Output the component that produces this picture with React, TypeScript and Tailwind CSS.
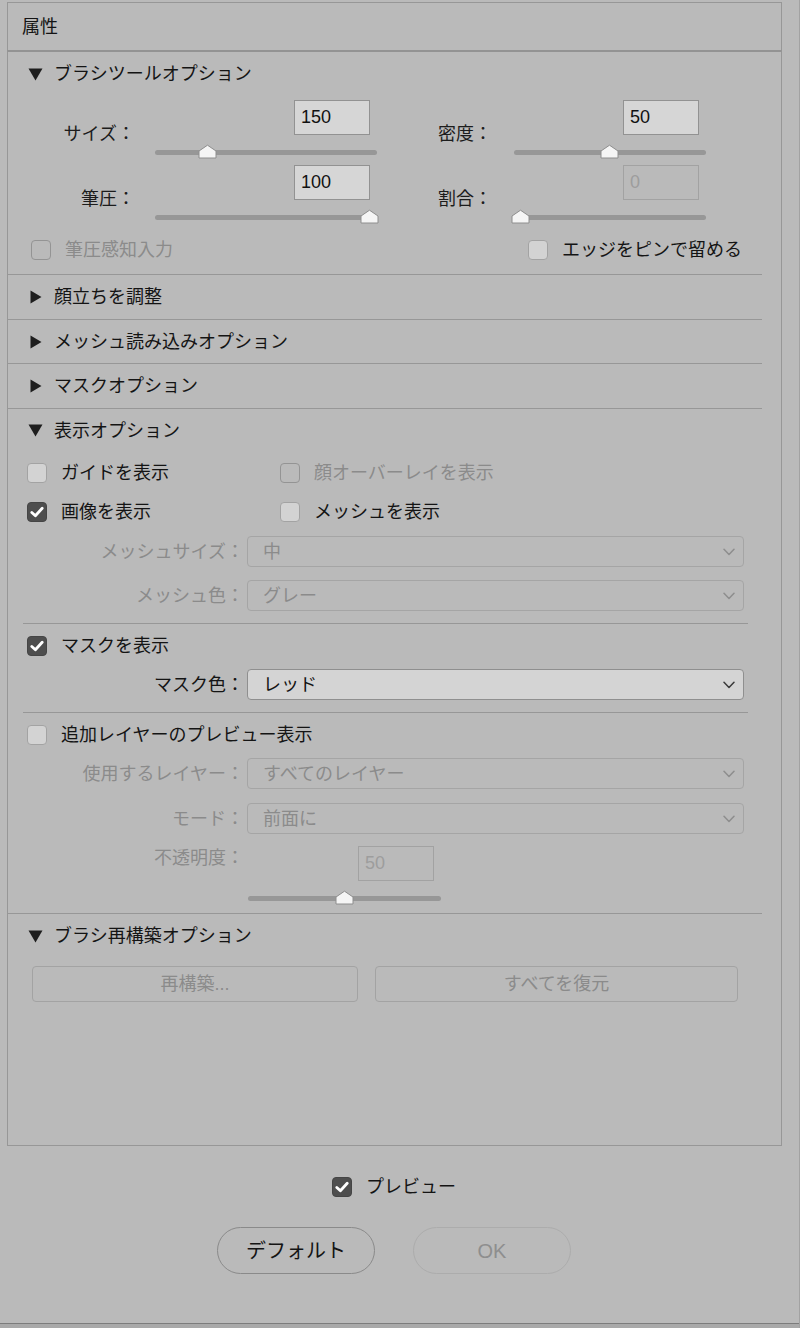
import React from "react";

const FONT = "font-['Liberation_Sans','Noto_Sans_CJK_JP',sans-serif]";

function Tri({ open }: { open: boolean }) {
  return open ? (
    <svg width="15" height="13" viewBox="0 0 15 13" className="ml-[1px]">
      <path d="M0.5 0.5 H14.5 L7.5 12.5 Z" fill="#1e1e1e" />
    </svg>
  ) : (
    <svg width="12" height="14" viewBox="0 0 12 14" className="ml-[3px]">
      <path d="M0.5 0.5 V13.5 L11.5 7 Z" fill="#1e1e1e" />
    </svg>
  );
}

function SectionHeader({ open, title, short = false }: { open: boolean; title: string; short?: boolean }) {
  return (
    <div className={short ? "h-[43px] flex items-center pl-[19px]" : "h-[44px] flex items-center pl-[19px]"}>
      <span className="w-[27px] flex items-center">
        <Tri open={open} />
      </span>
      <span className="text-[18px] leading-[24px] text-[#141414]">{title}</span>
    </div>
  );
}

function Box({ checked = false, disabled = false }: { checked?: boolean; disabled?: boolean }) {
  if (checked) {
    return (
      <span className="w-[20px] h-[20px] shrink-0 rounded-[4px] bg-[#4e4e4e] border border-[#454545] flex items-center justify-center">
        <svg width="14" height="12" viewBox="0 0 14 12">
          <path d="M1.8 6.4 L5.4 9.8 L12.2 2.2" fill="none" stroke="#ffffff" strokeWidth="2.8" strokeLinecap="round" strokeLinejoin="round" />
        </svg>
      </span>
    );
  }
  return (
    <span
      className={
        disabled
          ? "w-[20px] h-[20px] shrink-0 rounded-[4px] border border-[#949494]"
          : "w-[20px] h-[20px] shrink-0 rounded-[4px] border border-[#a3a3a3] bg-[#d3d3d3]"
      }
    />
  );
}

function Check({ label, checked = false, disabled = false }: { label: string; checked?: boolean; disabled?: boolean }) {
  return (
    <div className="flex items-center gap-[14px] h-[20px]">
      <Box checked={checked} disabled={disabled} />
      <span className={disabled ? "text-[18px] leading-[24px] text-[#8b8b8b]" : "text-[18px] leading-[24px] text-[#141414]"}>{label}</span>
    </div>
  );
}

function Thumb({ pos }: { pos: number }) {
  return (
    <svg className="absolute top-0" style={{ left: pos }} width="19" height="15" viewBox="0 0 19 15">
      <path d="M1 14 V7 L9.5 1.2 L18 7 V14 Z" fill="#f5f5f5" stroke="#8e8e8e" strokeWidth="1" strokeLinejoin="round" />
    </svg>
  );
}

function Track() {
  return <div className="absolute left-0 right-0 top-[6px] h-[5px] rounded-full bg-[#979797]" />;
}

function NumField({ value, disabled = false }: { value: string; disabled?: boolean }) {
  return (
    <div
      className={
        disabled
          ? "w-[76px] h-[35px] border border-[#a2a2a2] flex items-center pl-[6px] text-[18px] text-[#9d9d9d]"
          : "w-[76px] h-[35px] border border-[#929292] bg-[#d6d6d6] flex items-center pl-[6px] text-[18px] text-[#111111]"
      }
    >
      {value}
    </div>
  );
}

function Select({ label, value, disabled = false }: { label: string; value: string; disabled?: boolean }) {
  return (
    <div className="flex items-center h-[31px]">
      <div className={disabled ? "w-[236px] text-right text-[18px] leading-[24px] text-[#8b8b8b]" : "w-[236px] text-right text-[18px] leading-[24px] text-[#141414]"}>
        {label}
      </div>
      <div
        className={
          disabled
            ? "ml-[3px] w-[497px] h-[31px] rounded-[4px] border border-[#a5a5a5] flex items-center pl-[15px] pr-[8px]"
            : "ml-[3px] w-[497px] h-[31px] rounded-[4px] border border-[#8f8f8f] bg-[#d4d4d4] flex items-center pl-[15px] pr-[8px]"
        }
      >
        <span className={disabled ? "flex-1 text-[18px] leading-[24px] text-[#8b8b8b]" : "flex-1 text-[18px] leading-[24px] text-[#141414]"}>{value}</span>
        <svg width="12" height="8" viewBox="0 0 12 8">
          <path d="M1 1.2 L6 6.5 L11 1.2" fill="none" stroke={disabled ? "#8e8e8e" : "#3a3a3a"} strokeWidth="1.5" strokeLinecap="round" strokeLinejoin="round" />
        </svg>
      </div>
    </div>
  );
}

function SliderRow({
  l1, v1, p1, l2, v2, p2, d2 = false,
}: { l1: string; v1: string; p1: number; l2: string; v2: string; p2: number; d2?: boolean }) {
  return (
    <div className="flex">
      <div className="w-[127px] text-right pt-[22px] text-[18px] leading-[24px] text-[#1c1c1c]">{l1}</div>
      <div className="ml-[20px] w-[222px] flex flex-col">
        <div className="self-end mr-[7px]">
          <NumField value={v1} />
        </div>
        <div className="mt-[9px] relative h-[15px]">
          <Track />
          <Thumb pos={p1} />
        </div>
      </div>
      <div className="w-[115px] text-right pt-[22px] text-[18px] leading-[24px] text-[#1c1c1c]">{l2}</div>
      <div className="ml-[22px] w-[192px] flex flex-col">
        <div className="self-end mr-[7px]">
          <NumField value={v2} disabled={d2} />
        </div>
        <div className="mt-[9px] relative h-[15px]">
          <Track />
          <Thumb pos={p2} />
        </div>
      </div>
    </div>
  );
}

function Divider() {
  return <div className="ml-[15px] mr-[14px] h-px bg-[#979797]" />;
}

export default function App() {
  return (
    <div className={`${FONT} w-[800px] h-[1328px] bg-[#bababa] flex flex-col overflow-hidden border-r border-[#a2a2a2]`}>
      <div className="ml-[7px] mt-[2px] w-[775px] flex flex-col">
        <div className="h-[49px] border border-[#979797] flex items-center pl-[14px] text-[18px] leading-[24px] text-[#141414]">
          属性
        </div>
        <div className="h-[1096px] border border-t-2 border-[#979797] border-t-[#939393] -mt-px">
          <div className="mr-[19px] flex flex-col">
            {/* Section 1 */}
            <div className="border-b border-[#979797]">
              <SectionHeader open title="ブラシツールオプション" />
              <div className="pt-[4px] pb-[14px]">
                <div className="flex flex-col gap-[6px]">
                  <SliderRow l1="サイズ：" v1="150" p1={43} l2="密度：" v2="50" p2={86} />
                  <SliderRow l1="筆圧：" v1="100" p1={205} l2="割合：" v2="0" p2={-3} d2 />
                </div>
                <div className="mt-[16px] flex items-center">
                  <div className="pl-[23px] w-[520px]">
                    <Check label="筆圧感知入力" disabled />
                  </div>
                  <Check label="エッジをピンで留める" />
                </div>
              </div>
            </div>
            {/* Collapsed sections */}
            <div className="border-b border-[#979797]">
              <SectionHeader open={false} title="顔立ちを調整" />
            </div>
            <div className="border-b border-[#979797]">
              <SectionHeader open={false} title="メッシュ読み込みオプション" short />
            </div>
            <div className="border-b border-[#979797]">
              <SectionHeader open={false} title="マスクオプション" />
            </div>
            {/* 表示オプション */}
            <div className="border-b border-[#979797]">
              <SectionHeader open title="表示オプション" short />
              <div className="flex flex-col pb-[8px]">
                <div className="mt-[11px] flex pl-[19px]">
                  <div className="w-[253px]">
                    <Check label="ガイドを表示" />
                  </div>
                  <Check label="顔オーバーレイを表示" disabled />
                </div>
                <div className="mt-[19px] flex pl-[19px]">
                  <div className="w-[253px]">
                    <Check label="画像を表示" checked />
                  </div>
                  <Check label="メッシュを表示" />
                </div>
                <div className="mt-[14px]">
                  <Select label="メッシュサイズ：" value="中" disabled />
                </div>
                <div className="mt-[13px]">
                  <Select label="メッシュ色：" value="グレー" disabled />
                </div>
                <div className="mt-[12px]">
                  <Divider />
                </div>
                <div className="mt-[12px] pl-[19px]">
                  <Check label="マスクを表示" checked />
                </div>
                <div className="mt-[13px]">
                  <Select label="マスク色：" value="レッド" />
                </div>
                <div className="mt-[12px]">
                  <Divider />
                </div>
                <div className="mt-[12px] pl-[19px]">
                  <Check label="追加レイヤーのプレビュー表示" />
                </div>
                <div className="mt-[13px]">
                  <Select label="使用するレイヤー：" value="すべてのレイヤー" disabled />
                </div>
                <div className="mt-[14px]">
                  <Select label="モード：" value="前面に" disabled />
                </div>
                <div className="mt-[12px] flex">
                  <div className="w-[236px] text-right text-[18px] leading-[24px] text-[#8b8b8b]">不透明度：</div>
                  <div className="ml-[4px] w-[193px] flex flex-col">
                    <div className="self-end mr-[7px]">
                      <NumField value="50" disabled />
                    </div>
                    <div className="mt-[9px] relative h-[15px]">
                      <Track />
                      <Thumb pos={87} />
                    </div>
                  </div>
                </div>
              </div>
            </div>
            {/* ブラシ再構築 */}
            <div>
              <SectionHeader open title="ブラシ再構築オプション" />
              <div className="mt-[8px] flex pl-[24px]">
                <div className="w-[326px] h-[36px] rounded-[4px] border border-[#a3a3a3] flex items-center justify-center text-[18px] text-[#8b8b8b]">
                  再構築...
                </div>
                <div className="ml-[17px] w-[363px] h-[36px] rounded-[4px] border border-[#a3a3a3] flex items-center justify-center text-[18px] text-[#8b8b8b]">
                  すべてを復元
                </div>
              </div>
            </div>
          </div>
        </div>
      </div>
      {/* Footer */}
      <div className="w-[788px] flex flex-col items-center">
        <div className="mt-[30px] flex items-center gap-[14px] h-[21px]">
          <Box checked />
          <span className="text-[18px] leading-[24px] text-[#141414]">プレビュー</span>
        </div>
        <div className="mt-[30px] flex gap-[38px]">
          <div className="w-[158px] h-[47px] rounded-full border-[1.5px] border-[#8a8a8a] flex items-center justify-center text-[20px] text-[#141414]">
            デフォルト
          </div>
          <div className="w-[158px] h-[47px] rounded-full border-[1.5px] border-[#acacac] flex items-center justify-center text-[20px] text-[#8e8e8e]">
            OK
          </div>
        </div>
      </div>
      <div className="mt-auto h-[5px] border-t border-[#7c7c7c] bg-[#a9a9a9]" />
    </div>
  );
}
